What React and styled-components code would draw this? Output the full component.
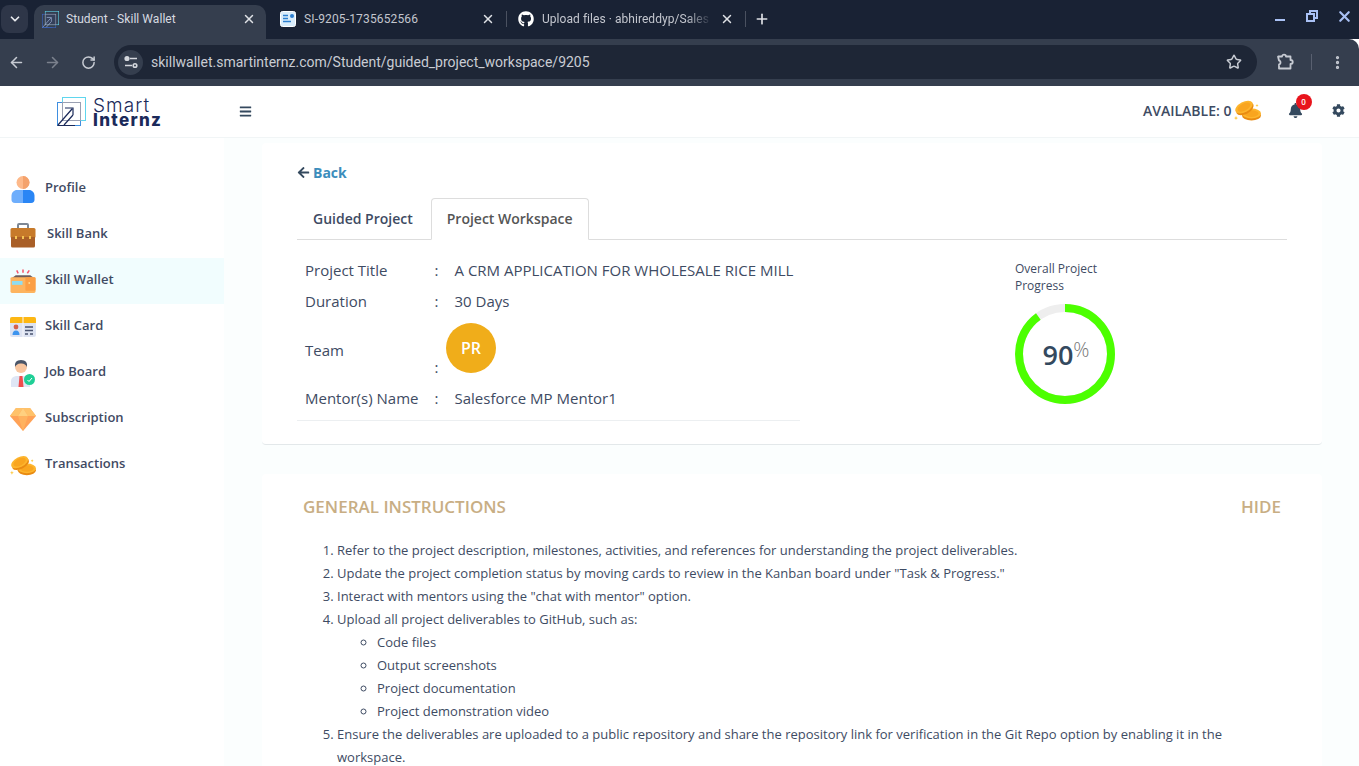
import styled, { createGlobalStyle } from 'styled-components';
import { ArrowLeft, ArrowRight, RotateCw, Star, EllipsisVertical, X, Plus, ChevronDown } from 'lucide-react';
import { FaBars, FaBell, FaCog, FaArrowLeft, FaGithub } from 'react-icons/fa';

const GlobalStyle = createGlobalStyle`
    * {
        box-sizing: border-box;
    }
    html, body {
        margin: 0;
        padding: 0;
        height: 100%;
        overflow: hidden;
        background: #ffffff;
    }
    body {
        font-family: 'Open Sans', 'Liberation Sans', sans-serif;
        color: #3e4b63;
    }
`;

const menu = [
    { label: 'Profile', icon: <ProfileIcon /> },
    { label: 'Skill Bank', icon: <BankIcon />, gap: 11 },
    { label: 'Skill Wallet', icon: <WalletIcon />, active: true },
    { label: 'Skill Card', icon: <CardIcon /> },
    { label: 'Job Board', icon: <JobIcon /> },
    { label: 'Subscription', icon: <GemIcon /> },
    { label: 'Transactions', icon: <CoinsIcon size={27} /> },
];

export default function App() {
    return (
        <Shell>
            <GlobalStyle />
            <TabStrip>
                <TabMenu><ChevronDown size={14} strokeWidth={3} /></TabMenu>
                <ActiveTab>
                    <LogoMark size={17} dark />
                    <TabTitle>Student - Skill Wallet</TabTitle>
                    <TabClose><X size={14} strokeWidth={2.5} /></TabClose>
                </ActiveTab>
                <Tab $width={240}>
                    <DocIcon />
                    <TabTitle $dim>SI-9205-1735652566</TabTitle>
                    <TabClose><X size={14} strokeWidth={2.5} /></TabClose>
                </Tab>
                <TabSeparator />
                <Tab $width={238} $left={11}>
                    <FaGithub size={16} color="#ffffff" />
                    <TabTitle $dim $fade>Upload files · abhireddyp/Sales</TabTitle>
                    <TabClose><X size={14} strokeWidth={2.5} /></TabClose>
                </Tab>
                <TabSeparator />
                <NewTab><Plus size={16} strokeWidth={2.5} /></NewTab>
                <WindowControls>
                    <WindowMinimise />
                    <RestoreIcon />
                    <X size={17} strokeWidth={3} />
                </WindowControls>
            </TabStrip>

            <Toolbar>
                <NavButton><ArrowLeft size={17} strokeWidth={2.2} /></NavButton>
                <NavButton $off><ArrowRight size={17} strokeWidth={2.2} /></NavButton>
                <NavButton><RotateCw size={15} strokeWidth={2.4} /></NavButton>
                <Omnibox>
                    <SiteChip><TuneIcon /></SiteChip>
                    <Url>skillwallet.smartinternz.com/Student/guided_project_workspace/9205</Url>
                    <Star size={16} strokeWidth={2.2} color="#c7cbd3" />
                </Omnibox>
                <ToolbarEnd>
                    <PuzzleIcon />
                    <ToolbarSeparator />
                    <EllipsisVertical size={17} strokeWidth={2.6} color="#c7cbd3" />
                </ToolbarEnd>
            </Toolbar>

            <AppHeader>
                <Brand>
                    <LogoMark size={29} />
                    <BrandName>
                        <span>Smart</span>
                        <strong>Internz</strong>
                    </BrandName>
                </Brand>
                <FaBars size={13} color="#34495e" />
                <HeaderRight>
                    <Available>AVAILABLE: 0</Available>
                    <CoinsIcon size={27} />
                    <BellWrap>
                        <FaBell size={15} color="#34495e" />
                        <Badge>0</Badge>
                    </BellWrap>
                    <FaCog size={13} color="#34495e" />
                </HeaderRight>
            </AppHeader>

            <Body>
                <Sidebar>
                    {menu.map((item) => (
                        <MenuRow key={item.label} $active={item.active} $gap={item.gap}>
                            <MenuIcon>{item.icon}</MenuIcon>
                            <MenuLabel>{item.label}</MenuLabel>
                        </MenuRow>
                    ))}
                </Sidebar>

                <Main>
                    <ProjectCard>
                        <BackLink>
                            <FaArrowLeft size={13} color="#34495e" />
                            <span>Back</span>
                        </BackLink>
                        <TabsRow>
                            <PageTab>Guided Project</PageTab>
                            <PageTab $active>Project Workspace</PageTab>
                        </TabsRow>
                        <Overview>
                            <Details>
                                <DetailRow>
                                    <span>Project Title</span>
                                    <span>:</span>
                                    <DetailValue>A CRM APPLICATION FOR WHOLESALE RICE MILL</DetailValue>
                                </DetailRow>
                                <DetailRow>
                                    <span>Duration</span>
                                    <span>:</span>
                                    <DetailValue>30 Days</DetailValue>
                                </DetailRow>
                                <DetailRow $team>
                                    <TeamLabel>Team</TeamLabel>
                                    <TeamColon>:</TeamColon>
                                    <Avatar>PR</Avatar>
                                </DetailRow>
                                <DetailRow>
                                    <span>Mentor(s) Name</span>
                                    <span>:</span>
                                    <DetailValue>Salesforce MP Mentor1</DetailValue>
                                </DetailRow>
                            </Details>
                            <Progress>
                                <ProgressTitle>Overall Project Progress</ProgressTitle>
                                <Ring>
                                    <svg width="100" height="100" viewBox="0 0 100 100">
                                        <circle cx="50" cy="50" r="46" fill="none" stroke="#eeeeee" strokeWidth="8" />
                                        <circle
                                            cx="50"
                                            cy="50"
                                            r="46"
                                            fill="none"
                                            stroke="#4cff00"
                                            strokeWidth="8"
                                            strokeDasharray={`${2 * Math.PI * 46 * 0.9} ${2 * Math.PI * 46}`}
                                            transform="rotate(-90 50 50)"
                                        />
                                    </svg>
                                    <RingValue>90<sup>%</sup></RingValue>
                                </Ring>
                            </Progress>
                        </Overview>
                    </ProjectCard>

                    <InstructionsCard>
                        <InstructionsHead>
                            <span>GENERAL INSTRUCTIONS</span>
                            <span>HIDE</span>
                        </InstructionsHead>
                        <Steps>
                            <li>Refer to the project description, milestones, activities, and references for understanding the project deliverables.</li>
                            <li>Update the project completion status by moving cards to review in the Kanban board under "Task &amp; Progress."</li>
                            <li>Interact with mentors using the "chat with mentor" option.</li>
                            <li>
                                Upload all project deliverables to GitHub, such as:
                                <SubSteps>
                                    <li>Code files</li>
                                    <li>Output screenshots</li>
                                    <li>Project documentation</li>
                                    <li>Project demonstration video</li>
                                </SubSteps>
                            </li>
                            <li>Ensure the deliverables are uploaded to a public repository and share the repository link for verification in the Git Repo option by enabling it in the workspace.</li>
                        </Steps>
                    </InstructionsCard>
                </Main>
            </Body>
        </Shell>
    );
}

function LogoMark({ size, dark }) {
    return (
        <svg width={size} height={size} viewBox="0 0 29 29" fill="none">
            <rect x="5.5" y="0.5" width="23" height="23" stroke="#5fd6ee" />
            <rect x="0.5" y="5.5" width="23" height="23" stroke={dark ? '#3c68c8' : '#3f8fe0'} />
            <rect x="5.5" y="5.5" width="18" height="18" fill={dark ? '#34405a' : '#ffffff'} stroke="#9aa0b2" />
            <path d="M1 28 L15 12 M8 11 H16 V18 M7 28 L16 18" stroke={dark ? '#9fb4d8' : '#1b2a5a'} strokeWidth="1.2" />
            <path d="M0.5 28.5 H18" stroke={dark ? '#3c68c8' : '#1b2a5a'} />
        </svg>
    );
}

function DocIcon() {
    return (
        <svg width="16" height="16" viewBox="0 0 16 16">
            <rect x="0.5" y="0.5" width="15" height="15" rx="2" fill="#d8ecfb" stroke="#ffffff" />
            <path d="M3 4.5 H8 M3 7.5 H8 M3 10.5 H11" stroke="#2c7fd0" strokeWidth="1.6" />
            <circle cx="12" cy="5" r="2" fill="#2c7fd0" />
        </svg>
    );
}

function RestoreIcon() {
    return (
        <svg width="12" height="12" viewBox="0 0 12 12" fill="none" stroke="#a9c1f5" strokeWidth="2">
            <rect x="4" y="1" width="7" height="7" />
            <rect x="1" y="4" width="7" height="7" fill="#192234" />
        </svg>
    );
}

function TuneIcon() {
    return (
        <svg width="14" height="14" viewBox="0 0 14 14" fill="none" stroke="#d5d8de" strokeWidth="1.6">
            <path d="M6 3.5 H13 M1 10.5 H8" />
            <circle cx="3" cy="3.5" r="1.8" fill="#d5d8de" />
            <circle cx="11" cy="10.5" r="1.8" />
        </svg>
    );
}

function PuzzleIcon() {
    return (
        <svg width="18" height="18" viewBox="0 0 18 18" fill="none" stroke="#c7cbd3" strokeWidth="1.8" strokeLinejoin="round">
            <path d="M2 3.5 H6 C6 1 10 1 10 3.5 H14.5 V7 C17.5 7 17.5 11 14.5 11 V15.5 H3 V11.5 C5 11.5 5 7.5 3 7.5 Z" />
        </svg>
    );
}

function ProfileIcon() {
    return (
        <svg width="24" height="27" viewBox="0 0 24 27">
            <circle cx="12" cy="6.5" r="6.5" fill="#fdb98a" />
            <path d="M12 0 A6.5 6.5 0 0 1 12 13 Z" fill="#f4a26c" />
            <path d="M6 14 H12 V27 H4 C1.5 27 0.5 25.5 0.5 23.5 V20 C0.5 16.5 3 14 6 14 Z" fill="#6eaefc" />
            <path d="M18 14 H12 V27 H20 C22.5 27 23.5 25.5 23.5 23.5 V20 C23.5 16.5 21 14 18 14 Z" fill="#2a86f5" />
        </svg>
    );
}

function BankIcon() {
    return (
        <svg width="26" height="25" viewBox="0 0 26 25">
            <path d="M8 6 V2 Q8 1 9 1 H17 Q18 1 18 2 V6" fill="none" stroke="#7d8794" strokeWidth="2" />
            <rect x="0.5" y="5" width="25" height="10" rx="1.5" fill="#c77a2a" />
            <path d="M1 14 H25 V23 Q25 24.5 23.5 24.5 H2.5 Q1 24.5 1 23 Z" fill="#a95f27" />
            <rect x="5" y="13" width="2" height="3" fill="#f5c453" />
            <rect x="12" y="13" width="2" height="3" fill="#f5c453" />
            <rect x="19" y="13" width="2" height="3" fill="#f5c453" />
        </svg>
    );
}

function WalletIcon() {
    return (
        <svg width="27" height="26" viewBox="0 0 27 26">
            <path d="M8.5 5 L7 2 M13.5 4.5 V1 M18 5 L20 2" stroke="#f4566c" strokeWidth="1.6" />
            <path d="M2 10 L6 7 H21 L25 10 Z" fill="#6f5d5c" />
            <rect x="0.5" y="9" width="26" height="16.5" rx="1.5" fill="#fdb45f" />
            <rect x="2" y="13" width="11" height="4" fill="#8fdcf0" />
            <rect x="16" y="9" width="10.5" height="14" rx="1" fill="#fb9f45" />
            <circle cx="20" cy="15" r="1" fill="#ffd98f" />
        </svg>
    );
}

function CardIcon() {
    return (
        <svg width="26" height="20" viewBox="0 0 26 20">
            <rect x="0" y="0" width="26" height="20" rx="2" fill="#dde3f2" />
            <path d="M0 6 V2 Q0 0 2 0 H24 Q26 0 26 2 V6 Z" fill="#fdb713" />
            <rect x="12.5" y="0" width="1" height="20" fill="#f7f8fc" />
            <circle cx="6" cy="10" r="2.4" fill="#d6614a" />
            <path d="M2.5 18 Q2.5 13.5 6 13.5 Q9.5 13.5 9.5 18 Z" fill="#3d94ee" />
            <path d="M15 10 H23 M15 13.5 H23 M15 17 H18 M20 17 H23" stroke="#4a5470" strokeWidth="1.4" />
        </svg>
    );
}

function JobIcon() {
    return (
        <svg width="26" height="27" viewBox="0 0 26 27">
            <path d="M1 27 V21 Q1 17 6 16 H16 Q20 17 20 21 V27 Z" fill="#dfe6f5" />
            <circle cx="11" cy="7" r="6" fill="#f8c6a0" />
            <path d="M5 7 Q4 0 11 0 Q18 0 17 7 Q15 3 11 3.5 Q7 3 5 7 Z" fill="#4a5568" />
            <path d="M9.5 16 H12.5 L13.5 27 H8.5 Z" fill="#ef4d4d" />
            <circle cx="19.5" cy="19.5" r="5.5" fill="#1fcf96" />
            <path d="M17.5 20 L19 21.5 L22 18" fill="none" stroke="#ffffff" strokeWidth="1" />
        </svg>
    );
}

function GemIcon() {
    return (
        <svg width="26" height="23" viewBox="0 0 26 23">
            <path d="M6 0 H20 L26 8 L13 23 L0 8 Z" fill="#ffa257" />
            <path d="M6 0 L0 8 H8 L13 0 Z" fill="#ffc26a" />
            <path d="M20 0 L26 8 H18 L13 0 Z" fill="#ffc26a" />
            <path d="M8 8 H18 L13 23 Z" fill="#ffb25f" />
            <path d="M8 8 L13 0 L18 8 Z" fill="#ffd07f" />
        </svg>
    );
}

function CoinsIcon({ size }) {
    return (
        <svg width={size} height={size * 0.82} viewBox="0 0 27 22">
            <ellipse cx="17.5" cy="16.5" rx="9.5" ry="5" fill="#e98b12" />
            <ellipse cx="17.5" cy="14.5" rx="9.5" ry="5" fill="#fdb52d" />
            <ellipse cx="17.5" cy="14.5" rx="7" ry="3.4" fill="#f9a51f" />
            <g transform="rotate(-28 10 8)">
                <ellipse cx="10" cy="10" rx="9.5" ry="5.2" fill="#e98b12" />
                <ellipse cx="10" cy="8" rx="9.5" ry="5.2" fill="#fdb52d" />
                <ellipse cx="10" cy="8" rx="7" ry="3.6" fill="#f9a51f" />
            </g>
            <path d="M2 17 L2.6 18.4 L4 19 L2.6 19.6 L2 21 L1.4 19.6 L0 19 L1.4 18.4 Z" fill="#fdc83c" />
            <path d="M23 5 L23.5 6 L24.5 6.5 L23.5 7 L23 8 L22.5 7 L21.5 6.5 L22.5 6 Z" fill="#fdc83c" />
        </svg>
    );
}

const Shell = styled.div`
    height: 766px;
    display: flex;
    flex-direction: column;
    overflow: hidden;
`;

const TabStrip = styled.div`
    height: 39px;
    flex: none;
    background-color: #192234;
    display: flex;
    align-items: flex-end;
    padding-left: 1px;
    font-family: 'Roboto', sans-serif;
    font-size: 12px;
`;

const TabMenu = styled.div`
    width: 27px;
    height: 28px;
    margin: 0 6px 6px 0;
    border-radius: 8px;
    background-color: #2e3648;
    color: #e8eaee;
    display: flex;
    align-items: center;
    justify-content: center;
`;

const Tab = styled.div`
    width: ${(props) => props.$width}px;
    height: 34px;
    display: flex;
    align-items: center;
    gap: 8px;
    padding: 0 11px 6px ${(props) => props.$left || 14}px;
    color: #c9ccd3;
`;

const ActiveTab = styled(Tab)`
    width: 232px;
    background-color: #353e4e;
    border-radius: 10px 10px 0 0;
    padding: 0 10px 6px 8px;
    gap: 7px;
    color: #d7dae0;
`;

const TabTitle = styled.span`
    flex: 1;
    min-width: 0;
    white-space: nowrap;
    overflow: hidden;
    letter-spacing: ${(props) => (props.$fade ? 0.05 : props.$dim ? 0.15 : 0.05)}px;
    color: ${(props) => (props.$dim ? '#c3c6ce' : '#d7dae0')};
    ${(props) =>
        props.$fade &&
        `-webkit-mask-image: linear-gradient(90deg, #000 85%, transparent); mask-image: linear-gradient(90deg, #000 85%, transparent);`}
`;

const TabClose = styled.span`
    display: flex;
    color: #dfe1e6;
`;

const TabSeparator = styled.div`
    width: 1px;
    height: 16px;
    margin-bottom: 12px;
    background-color: #4a5160;
`;

const NewTab = styled.div`
    width: 32px;
    height: 34px;
    padding-bottom: 6px;
    display: flex;
    align-items: center;
    justify-content: center;
    color: #dfe1e6;
`;

const WindowControls = styled.div`
    margin-left: auto;
    height: 39px;
    display: flex;
    align-items: center;
    gap: 18px;
    padding-right: 6px;
    padding-bottom: 7px;
    color: #a9c1f5;
`;

const WindowMinimise = styled.div`
    width: 10px;
    height: 2px;
    margin: 8px 3px 0 0;
    background-color: #a9c1f5;
`;

const Toolbar = styled.div`
    height: 47px;
    flex: none;
    background-color: #353e4e;
    border-radius: 0 10px 0 0;
    display: flex;
    align-items: center;
    gap: 4px;
    padding: 0 13px 1px 0;
`;

const NavButton = styled.div`
    width: 32px;
    display: flex;
    justify-content: center;
    color: ${(props) => (props.$off ? '#7b818d' : '#c7cbd3')};
`;

const Omnibox = styled.div`
    width: 1143px;
    height: 34px;
    margin-left: 6px;
    border-radius: 17px;
    background-color: #1e2636;
    display: flex;
    align-items: center;
    padding: 0 15px 0 4px;
`;

const SiteChip = styled.div`
    width: 25px;
    height: 25px;
    border-radius: 50%;
    background-color: #353e4e;
    display: flex;
    align-items: center;
    justify-content: center;
`;

const Url = styled.div`
    flex: 1;
    margin-left: 8px;
    font-family: 'Roboto', sans-serif;
    font-size: 14px;
    color: #c9ccd3;
`;

const ToolbarEnd = styled.div`
    flex: 1;
    display: flex;
    align-items: center;
    justify-content: flex-end;
    gap: 17px;
`;

const ToolbarSeparator = styled.div`
    width: 1px;
    height: 16px;
    background-color: #596070;
`;

const AppHeader = styled.header`
    height: 52px;
    flex: none;
    background-color: #ffffff;
    display: flex;
    align-items: center;
    border-bottom: 1px solid #f1f5f6;
    padding-right: 14px;
`;

const Brand = styled.div`
    width: 239px;
    display: flex;
    align-items: center;
    gap: 7px;
    padding-left: 57px;
`;

const BrandName = styled.div`
    display: flex;
    flex-direction: column;
    padding-top: 3px;
    font-family: 'Inter', sans-serif;
    line-height: 14.5px;
    color: #1b2a5a;
    span {
        font-size: 19px;
        font-weight: 300;
        letter-spacing: 1.1px;
    }
    strong {
        font-size: 17px;
        font-weight: 800;
        letter-spacing: 1.3px;
    }
`;

const HeaderRight = styled.div`
    margin-left: auto;
    padding-bottom: 3px;
    display: flex;
    align-items: center;
`;

const Available = styled.span`
    font-size: 14px;
    font-weight: 600;
    color: #3e4b63;
    margin-right: 2px;
`;

const BellWrap = styled.div`
    position: relative;
    display: flex;
    margin: 0 29.5px 0 27px;
`;

const Badge = styled.span`
    position: absolute;
    top: -9px;
    left: 8px;
    width: 16px;
    height: 16px;
    border-radius: 50%;
    background-color: #e8141c;
    color: #ffffff;
    font-size: 8px;
    font-weight: 600;
    display: flex;
    align-items: center;
    justify-content: center;
`;

const Body = styled.div`
    flex: 1;
    min-height: 0;
    display: flex;
`;

const Sidebar = styled.nav`
    width: 224px;
    flex: none;
    background-color: #ffffff;
    padding-top: 28px;
`;

const MenuRow = styled.div`
    height: 46px;
    display: flex;
    align-items: center;
    gap: ${(props) => props.$gap || 9}px;
    padding-left: 10px;
    font-size: 13px;
    font-weight: 600;
    color: #3f4a63;
    background-color: ${(props) => (props.$active ? '#f1fdfe' : 'transparent')};
`;

const MenuIcon = styled.div`
    width: 26px;
    display: flex;
    justify-content: center;
`;

const MenuLabel = styled.span`
    padding-bottom: 4px;
`;

const Main = styled.main`
    flex: 1;
    min-width: 0;
    background-color: #fbfefe;
    padding: 5px 37px 0 38px;
    display: flex;
    flex-direction: column;
    gap: 29px;
`;

const ProjectCard = styled.section`
    height: 302px;
    flex: none;
    background-color: #ffffff;
    border-bottom: 1px solid #e3e8ea;
    border-radius: 4px;
    padding: 19px 35px 0;
`;

const BackLink = styled.div`
    display: flex;
    align-items: center;
    gap: 3px;
    height: 20px;
    font-size: 14px;
    font-weight: 700;
    color: #3c8dbc;
`;

const TabsRow = styled.div`
    display: flex;
    height: 42px;
    margin-top: 16px;
    border-bottom: 1px solid #dddddd;
`;

const PageTab = styled.div`
    height: 42px;
    padding: 0 15px 2px;
    margin-right: ${(props) => (props.$active ? 0 : 2)}px;
    display: flex;
    align-items: center;
    font-size: 14px;
    font-weight: 600;
    color: ${(props) => (props.$active ? '#555555' : '#3e4b63')};
    background-color: ${(props) => (props.$active ? '#ffffff' : 'transparent')};
    border: 1px solid ${(props) => (props.$active ? '#dddddd' : 'transparent')};
    border-bottom-color: ${(props) => (props.$active ? '#ffffff' : 'transparent')};
    border-radius: 4px 4px 0 0;
`;

const Overview = styled.div`
    display: flex;
    justify-content: space-between;
`;

const Details = styled.div`
    width: 503px;
    height: 181px;
    padding: 15px 0 0 8px;
    border-bottom: 1px solid #eceff1;
`;

const DetailRow = styled.div`
    display: grid;
    grid-template-columns: 129.5px 11.5px 1fr;
    align-items: center;
    height: ${(props) => (props.$team ? 63 : 30.5)}px;
    margin-bottom: ${(props) => (props.$team ? 4 : 0)}px;
    font-size: 15px;
    color: #3e4b63;
`;

const DetailValue = styled.span`
    padding-left: 8.5px;
    white-space: nowrap;
`;

const TeamLabel = styled.span`
    padding-top: 4px;
`;

const TeamColon = styled.span`
    align-self: end;
    margin-bottom: 2px;
`;

const Avatar = styled.div`
    width: 50px;
    height: 50px;
    border-radius: 50%;
    background-color: #f0ad1a;
    color: #ffffff;
    font-size: 16px;
    font-weight: 600;
    display: flex;
    align-items: center;
    justify-content: center;
    margin-top: 1px;
`;

const Progress = styled.div`
    width: 272px;
    padding-top: 20px;
`;

const ProgressTitle = styled.div`
    width: 110px;
    font-size: 12px;
    line-height: 17px;
    color: #3e4b63;
`;

const Ring = styled.div`
    position: relative;
    width: 100px;
    height: 100px;
    margin-top: 10px;
`;

const RingValue = styled.div`
    position: absolute;
    inset: 0;
    padding-left: 2px;
    display: flex;
    align-items: center;
    justify-content: center;
    font-size: 27px;
    font-weight: 600;
    color: #34495e;
    sup {
        font-size: 20px;
        font-weight: 300;
        color: #777777;
        margin-bottom: 8px;
        line-height: 1;
    }
`;

const InstructionsCard = styled.section`
    flex: 1;
    background-color: #ffffff;
    border-radius: 4px;
    padding: 22px 41px 0;
`;

const InstructionsHead = styled.div`
    display: flex;
    justify-content: space-between;
    font-size: 17px;
    font-weight: 600;
    line-height: 22px;
    color: #c8ae84;
`;

const Steps = styled.ol`
    margin: 21px 0 0;
    padding-left: 34px;
    font-size: 13px;
    line-height: 23px;
    color: #3e4b63;
`;

const SubSteps = styled.ul`
    margin: 0;
    padding-left: 40px;
`;
